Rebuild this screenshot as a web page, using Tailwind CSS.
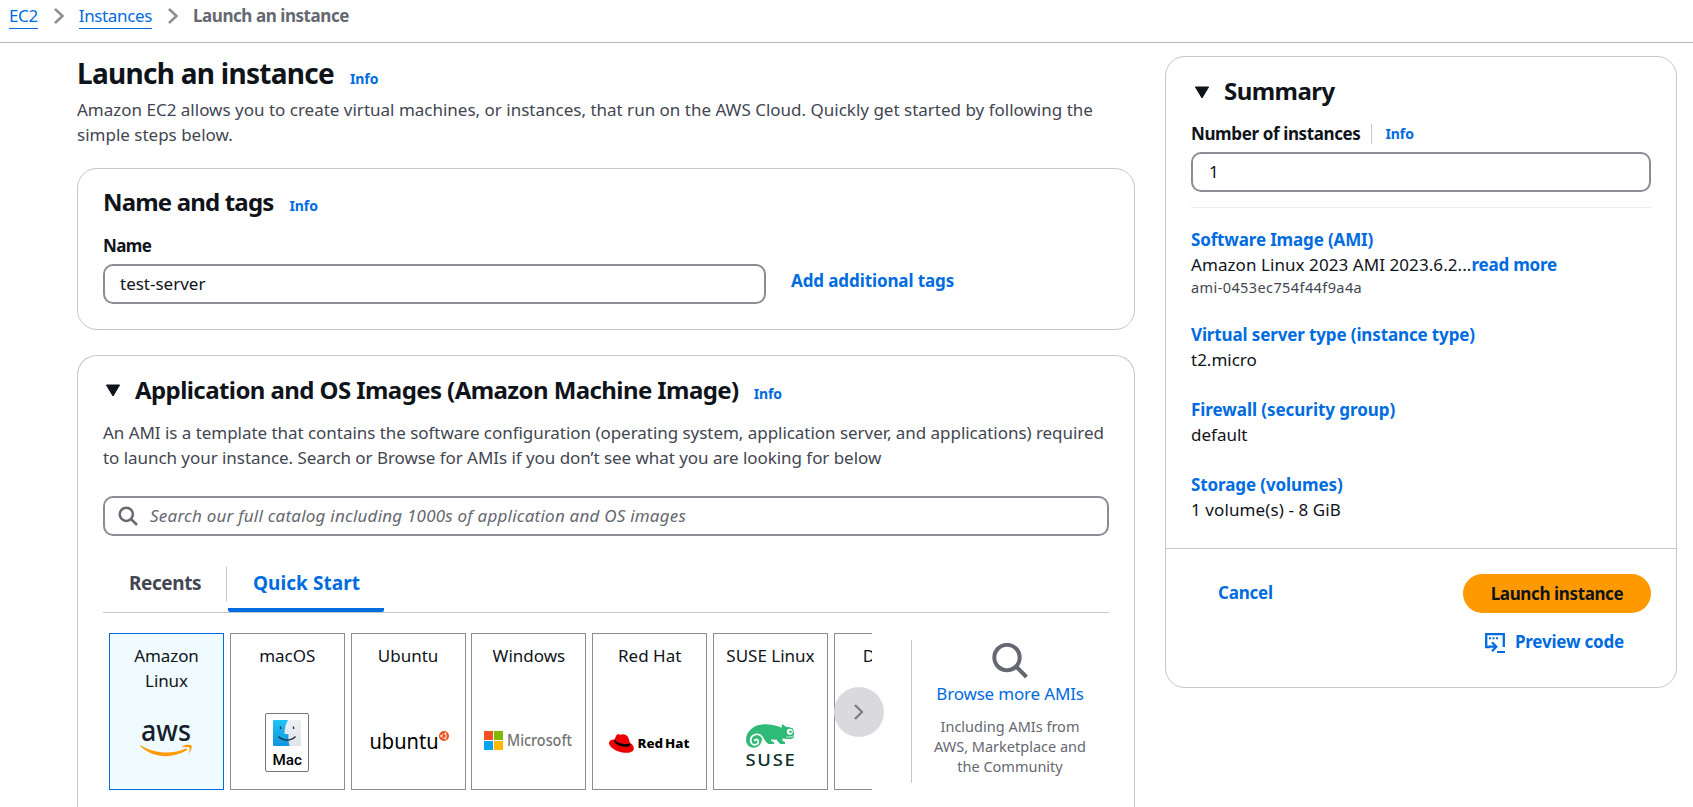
<!DOCTYPE html>
<html lang="en">
<head>
<meta charset="utf-8">
<title>Launch an instance</title>
<script src="https://cdn.jsdelivr.net/npm/@tailwindcss/browser@4"></script>
</head>
<body class="h-[807px] overflow-hidden bg-white font-['Noto_Sans',sans-serif] text-[17px] leading-[25px] text-[#0f141a]">

<nav class="flex h-[43px] items-start border-b border-[#b4b4bb] pt-[3px] pl-[9px]">
  <a class="h-[26px] border-b border-[#006ce0] tracking-[-0.4px] text-[#006ce0]">EC2</a>
  <svg class="mt-[4px] ml-[15px] h-[18px] w-[12px]" viewBox="0 0 12 18" fill="none" stroke="#8c8c94" stroke-width="2.5"><path d="M2 2l7.5 7L2 16"/></svg>
  <a class="ml-[14px] h-[26px] border-b border-[#006ce0] tracking-[-0.36px] text-[#006ce0]">Instances</a>
  <svg class="mt-[4px] ml-[15px] h-[18px] w-[12px]" viewBox="0 0 12 18" fill="none" stroke="#8c8c94" stroke-width="2.5"><path d="M2 2l7.5 7L2 16"/></svg>
  <span class="ml-[14px] font-bold tracking-[-0.44px] text-[#656871]">Launch an instance</span>
</nav>

<div class="flex items-start gap-[30px] pl-[77px]">
  <main class="w-[1058px] shrink-0 pt-[12px]">
    <div class="flex h-[36px] items-baseline">
      <h1 class="text-[28px] leading-[37px] font-bold tracking-[-0.72px]">Launch an instance</h1>
      <a class="ml-[16px] text-[14px] font-bold tracking-[-0.1px] text-[#006ce0]">Info</a>
    </div>
    <p class="mt-[6px] whitespace-nowrap text-[#424650]">Amazon EC2 allows you to create virtual machines, or instances, that run on the AWS Cloud. Quickly get started by following the<br>simple steps below.</p>

    <section class="mt-[21px] h-[162px] rounded-[20px] border border-[#c6c6cd] px-[25px] pt-[18px]">
      <div class="flex h-[30px] items-baseline">
        <h2 class="text-[24px] leading-[30px] font-bold tracking-[-0.83px]">Name and tags</h2>
        <a class="ml-[16px] text-[14px] leading-5 font-bold tracking-[-0.1px] text-[#006ce0]">Info</a>
      </div>
      <div class="mt-4 font-bold tracking-[-0.6px]">Name</div>
      <div class="mt-[6px] flex items-start">
        <div class="flex h-10 w-[663px] items-center rounded-[10px] border-2 border-[#8c8c94] pb-px pl-[15px]">test-server</div>
        <a class="mt-[4px] ml-[25px] font-bold tracking-[-0.1px] text-[#006ce0]">Add additional tags</a>
      </div>
    </section>

    <section class="mt-[25px] h-[452px] rounded-t-[20px] border border-b-0 border-[#c6c6cd] px-[25px] pt-[19px]">
      <div class="flex h-[30px] items-baseline">
        <svg class="mr-[14px] ml-[2px] h-[13px] w-[16px] -translate-y-[2px]" viewBox="0 0 16 13"><path d="M1.4 1h13.2L8 12z" fill="#0f141a" stroke="#0f141a" stroke-linejoin="round"/></svg>
        <h2 class="text-[24px] leading-[30px] font-bold tracking-[-0.58px]">Application and OS Images (Amazon Machine Image)</h2>
        <a class="ml-[15px] text-[14px] leading-5 font-bold tracking-[-0.1px] text-[#006ce0]">Info</a>
      </div>
      <p class="mt-[15px] whitespace-nowrap text-[#424650]"><span class="tracking-[-0.04px]">An AMI is a template that contains the software configuration (operating system, application server, and applications) required</span><br><span class="tracking-[-0.05px]">to launch your instance. Search or Browse for AMIs if you don’t see what you are looking for below</span></p>

      <div class="mt-[26px] flex h-10 items-center rounded-[10px] border-2 border-[#8c8c94] pb-px pl-[13px]">
        <svg class="h-5 w-5" viewBox="0 0 20 20" fill="none" stroke="#656871" stroke-width="2.5"><circle cx="8.3" cy="8.3" r="6.6"/><path d="M13 13l6 6"/></svg>
        <span class="ml-[12px] tracking-[0.22px] text-[#656871] italic">Search our full catalog including 1000s of application and OS images</span>
      </div>

      <div class="mt-[31px] flex h-[46px] border-b border-[#c6c6cd] text-[19px] font-bold">
        <div class="h-[34px] w-[124px] border-r border-[#c6c6cd] pt-[4px] pl-[26px] tracking-[-0.43px] text-[#424650]">Recents</div>
        <div class="ml-px h-[45px] w-[156px] rounded-b-[2px] border-b-4 border-[#006ce0] pt-[4px] pl-[25px] tracking-[0.05px] text-[#006ce0]">Quick Start</div>
      </div>

      <div class="mt-5 flex">
        <div class="relative ml-[6px] w-[763px]">
          <div class="flex h-[157px] gap-[5.8px] overflow-hidden text-center">
            <div class="w-[115px] shrink-0 border border-[#006ce0] bg-[#f0fbff] pt-[9px]">
              <div class="h-[50px] tracking-[-0.1px]">Amazon<br>Linux</div>
              <svg class="h-[96px] w-[113px]" viewBox="0 0 113 96">
                <text x="31" y="47.500" font-size="28.500" textLength="50" lengthAdjust="spacingAndGlyphs" font-weight="500" fill="#161e2d">aws</text>
                <path d="M30.500 52.200c14 8.600 32 9.600 45.500 3l1.300 1.900C61 66.500 43 64.800 30.200 53.200z" fill="#f90"/>
                <path d="M72.300 53.300c3-2.200 8.300-1.900 9.300-.7.600 1.800-.6 5.900-3 8.100.7-2.500 1.600-5 1.100-6-.8-1-4.400-.8-7.400-.4z" fill="#f90"/>
              </svg>
            </div>
            <div class="w-[115px] shrink-0 border border-[#8c8c94] pt-[9px]">
              <div class="h-[50px]">macOS</div>
              <svg class="h-[96px] w-[113px]" viewBox="0 0 113 96">
                <defs>
                  <linearGradient id="finderBlue" x1="0" y1="0" x2="0" y2="1"><stop offset="0" stop-color="#1fc3f5"/><stop offset="1" stop-color="#1295df"/></linearGradient>
                  <linearGradient id="finderGrey" x1="0" y1="0" x2="0" y2="1"><stop offset="0" stop-color="#eef0f5"/><stop offset="1" stop-color="#dfe3ea"/></linearGradient>
                </defs>
                <rect x="34.500" y="20.500" width="43" height="58" rx="1.500" fill="#fff" stroke="#777"/>
                <rect x="42" y="27" width="28" height="26" rx="1" fill="url(#finderGrey)"/>
                <path d="M43 27h14c-2.500 4-3.500 9-3.500 14h4c-.2 4 0 8 1 12H43q-1 0-1-1V28q0-1 1-1z" fill="url(#finderBlue)"/>
                <path d="M49.500 33.500v2.500M62.500 33.500v2.500" stroke="#1b2b3c" stroke-width="1.300"/>
                <path d="M47.500 43.500c4.500 4.800 12.500 4.800 17 0" fill="none" stroke="#1b2b3c" stroke-width="1.200"/>
                <text x="41.500" y="71.500" font-family="Roboto" font-size="14.500" font-weight="500" textLength="29.500" lengthAdjust="spacingAndGlyphs" fill="#000">Mac</text>
              </svg>
            </div>
            <div class="w-[115px] shrink-0 border border-[#8c8c94] pt-[9px]">
              <div class="h-[50px]">Ubuntu</div>
              <svg class="h-[96px] w-[113px]" viewBox="0 0 113 96">
                <text x="17.500" y="55.500" font-size="21.500" textLength="69" lengthAdjust="spacingAndGlyphs" fill="#000">ubuntu</text>
                <circle cx="92" cy="43" r="5" fill="#e95420"/>
                <circle cx="92" cy="43" r="2.300" fill="none" stroke="#fff" stroke-width="1" stroke-dasharray="3.800 1"/>
                <g fill="#fff"><circle cx="88.800" cy="43" r=".8"/><circle cx="93.600" cy="40.200" r=".8"/><circle cx="93.600" cy="45.800" r=".8"/></g>
              </svg>
            </div>
            <div class="w-[115px] shrink-0 border border-[#8c8c94] pt-[9px]">
              <div class="h-[50px]">Windows</div>
              <svg class="h-[96px] w-[113px]" viewBox="0 0 113 96">
                <path d="M12 38h9v9h-9z" fill="#f25022"/><path d="M22 38h9v9h-9z" fill="#7fba00"/>
                <path d="M12 48h9v9h-9z" fill="#00a4ef"/><path d="M22 48h9v9h-9z" fill="#ffb900"/>
                <text x="35" y="53" font-size="15.500" font-weight="500" textLength="65" lengthAdjust="spacingAndGlyphs" fill="#737373">Microsoft</text>
              </svg>
            </div>
            <div class="w-[115px] shrink-0 border border-[#8c8c94] pt-[9px]">
              <div class="h-[50px]">Red Hat</div>
              <svg class="h-[96px] w-[113px]" viewBox="0 0 113 96">
                <path d="M21.500 46.500l1.500-3.500c.6-1.500 2-2 3.500-1.500 1.500.7 2.500-.5 4-.2 3.500.7 4.500 2.200 5.500 5.200l1 3.500c2.500 1.200 4 3.500 3.800 6-.6 3.500-5.500 4-9 3.800-7-.3-14.800-4.800-15.700-9-.6-2.800 2-4.300 5.400-4.300z" fill="#e00"/>
                <path d="M21.500 46.500c-.8 1.500 0 3 1.500 4.200 3.500 2.800 11 4 13.500 2.300 1-.6 1-1.500.5-3-1.800 1.600-5 1.400-8.500.5-3.500-1-6.500-2.500-7-4z" fill="#000"/>
                <text x="44.500" y="54.500" font-size="13" font-weight="800" word-spacing="-1.500" textLength="52" lengthAdjust="spacingAndGlyphs" fill="#000">Red Hat</text>
              </svg>
            </div>
            <div class="w-[115px] shrink-0 border border-[#8c8c94] pt-[9px]">
              <div class="h-[50px]">SUSE Linux</div>
              <svg class="h-[96px] w-[113px]" viewBox="0 0 113 96">
                <path d="M32 47c0-9 8-15.500 18-15.800 7-.2 12.500 1.300 17.500 3.500l.8-3.700 3.700 2.700c3 .3 5.500.8 7 1.800 1 3 1.300 6 .8 8.500-.8 2-3.500 2.200-6 2l-5.300-.5c-.8 1.500.5 2.800 2.500 3.500v2h-4.500c-2-1.200-3-3-4-4.500-2 .5-3.500 0-5.500 0 0 1.500 1.500 2.300 3 2.800v1.700h-5.500c-2.500-1.500-3.500-3.500-5-6l-1.500.5c0 5-3.500 9.200-8.200 9.200C35.500 54.700 32 51.500 32 47z" fill="#30ba78"/>
                <path d="M48.500 44.500c-2-3-5.500-4-8.500-2.500-4.300 2-4.500 8.500-.3 9.700 2.800.7 5.300-1.500 4.500-4-.6-1.800-3-1.800-3.500-.3" fill="none" stroke="#fff" stroke-width="1.700" stroke-linecap="round"/>
                <circle cx="75.800" cy="38.800" r="3" fill="#fff"/><circle cx="76.500" cy="38.800" r="1.300" fill="#30ba78"/>
                <path d="M72.500 44c3 .3 5 0 7-1.300" stroke="#fff" stroke-width=".8" fill="none"/>
                <text x="31.500" y="72.700" font-size="16" font-weight="500" letter-spacing="1.500" textLength="51" lengthAdjust="spacingAndGlyphs" fill="#0c322c">SUSE</text>
              </svg>
            </div>
            <div class="w-[115px] shrink-0 border border-[#8c8c94] pt-[9px]">
              <div class="h-[50px]">Debian</div>
            </div>
          </div>
          <button class="absolute top-[54px] left-[725px] flex size-[50px] items-center justify-center rounded-full bg-[#d7d7dc]/95">
            <svg class="h-[18px] w-[12px]" viewBox="0 0 12 18" fill="none" stroke="#7d7d85" stroke-width="2.300"><path d="M2 2l7 7-7 7"/></svg>
          </button>
        </div>

        <div class="mt-[7px] ml-[39px] flex h-[143px] w-[197px] flex-col items-center border-l border-[#c6c6cd]">
          <svg class="mt-[3px] h-[36px] w-[36px]" viewBox="0 0 36 36" fill="none" stroke="#656871" stroke-width="4"><circle cx="15" cy="14.500" r="12.700"/><path d="M24 23.500l10.500 10.500"/></svg>
          <a class="mt-[2px] tracking-[-0.18px] text-[#006ce0]">Browse more AMIs</a>
          <p class="mt-[10px] text-center text-[14.500px] leading-5 text-[#656871]">Including AMIs from<br>AWS, Marketplace and<br>the Community</p>
        </div>
      </div>
    </section>
  </main>

  <aside class="mt-[13px] h-[632px] w-[512px] shrink-0 rounded-[20px] border border-[#c6c6cd]">
    <div class="h-[491px] px-[25px] pt-[19px]">
      <div class="flex h-[30px] items-baseline">
        <svg class="mr-[14px] ml-[3px] h-[13px] w-[16px] -translate-y-[1px]" viewBox="0 0 16 13"><path d="M1.4 1h13.2L8 12z" fill="#0f141a" stroke="#0f141a" stroke-linejoin="round"/></svg>
        <h2 class="text-[24px] leading-[30px] font-bold tracking-[-0.55px]">Summary</h2>
      </div>
      <div class="mt-[15px] flex items-center">
        <span class="font-bold tracking-[-0.38px]">Number of instances</span>
        <span class="ml-[10px] h-5 w-px bg-[#c6c6cd]"></span>
        <a class="ml-[14px] pt-px text-[14px] leading-6 font-bold tracking-[-0.1px] text-[#006ce0]">Info</a>
      </div>
      <div class="mt-[6px] flex h-10 items-center rounded-[10px] border-2 border-[#8c8c94] pb-px pl-[16px]">1</div>
      <div class="mt-[15px] h-px bg-[#ebebf0]"></div>

      <a class="mt-[19px] block font-bold tracking-[-0.15px] text-[#006ce0]">Software Image (AMI)</a>
      <div class="whitespace-nowrap"><span class="tracking-[0.07px]">Amazon Linux 2023 AMI 2023.6.2...</span><a class="font-bold tracking-[-0.2px] text-[#006ce0]">read more</a></div>
      <div class="text-[14.500px] leading-5 tracking-[0.4px] text-[#424650]">ami-0453ec754f44f9a4a</div>

      <a class="mt-[25px] block font-bold tracking-[-0.13px] text-[#006ce0]">Virtual server type (instance type)</a>
      <div>t2.micro</div>
      <a class="mt-[25px] block font-bold tracking-[-0.05px] text-[#006ce0]">Firewall (security group)</a>
      <div>default</div>
      <a class="mt-[25px] block font-bold tracking-[-0.1px] text-[#006ce0]">Storage (volumes)</a>
      <div class="tracking-[0.1px]">1 volume(s) - 8 GiB</div>
    </div>
    <div class="border-t border-[#c6c6cd] px-[25px] pt-[25px] font-bold">
      <div class="flex items-start justify-between">
        <a class="mt-[6px] ml-[27px] tracking-[-0.2px] text-[#006ce0]">Cancel</a>
        <button class="flex h-[39px] w-[188px] items-center justify-center rounded-full bg-[#f90] pb-px tracking-[-0.38px]">Launch instance</button>
      </div>
      <div class="mt-[16px] flex justify-end pr-[27px]">
        <svg class="mt-[4px] h-5 w-5" viewBox="0 0 20 20" fill="none" stroke="#006ce0" stroke-width="2.300"><path d="M5 14H1.200V1.200h17.600v12.800"/><path d="M4 5.200h2M7.500 5.200h2M11 5.200h2" stroke-width="2"/><path d="M4 13.700h7M7 9.200l4.300 4.500L7 18.200"/><path d="M12 19h8" stroke-width="2"/></svg>
        <a class="ml-[10px] tracking-[-0.2px] text-[#006ce0]">Preview code</a>
      </div>
    </div>
  </aside>
</div>
</body>
</html>
